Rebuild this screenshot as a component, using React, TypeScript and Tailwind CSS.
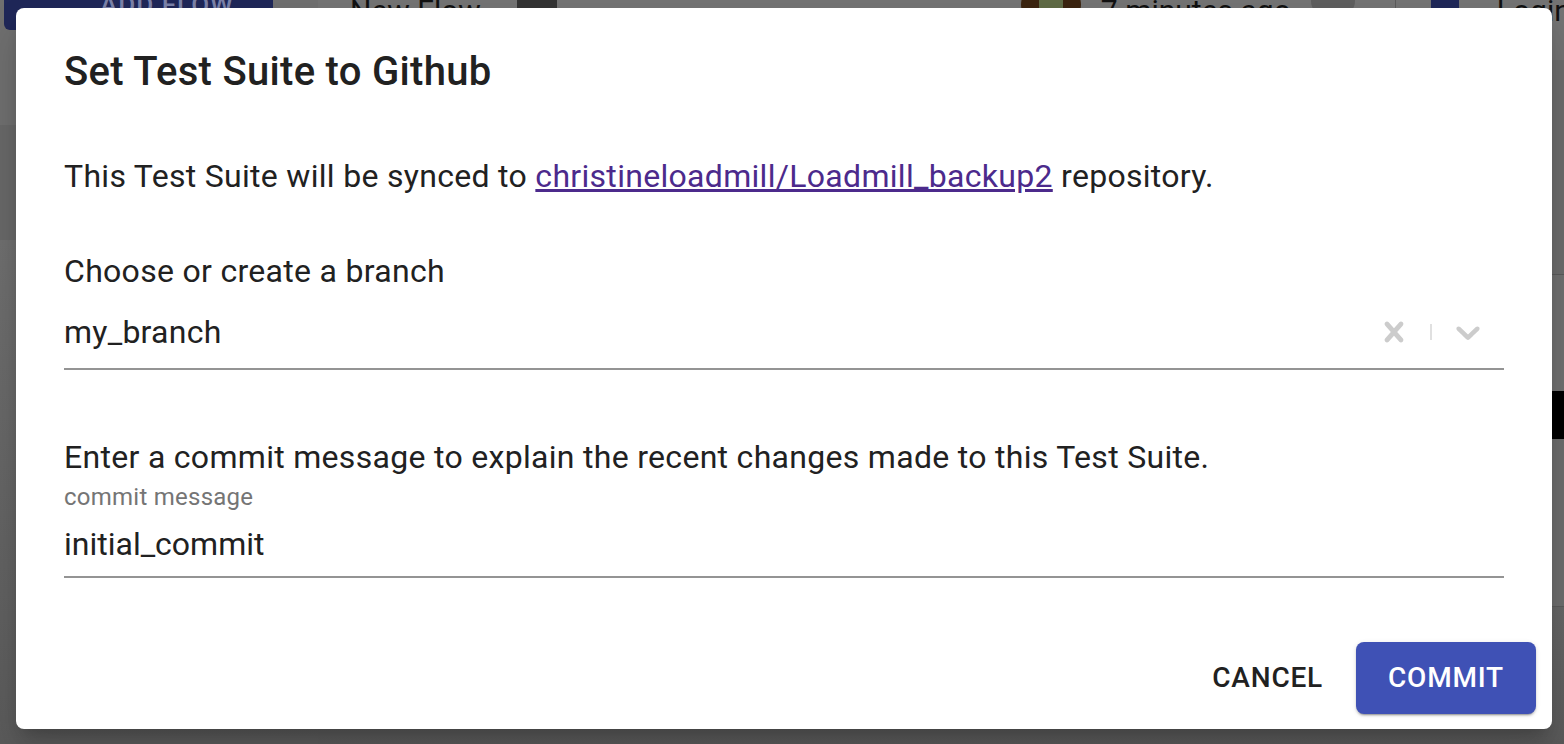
import React from "react";

function CrossIcon() {
  return (
    <svg viewBox="0 0 20 20" className="h-[40px] w-[40px] fill-[#cccccc]">
      <path d="M14.348 14.849c-0.469 0.469-1.229 0.469-1.697 0l-2.651-3.030-2.651 3.029c-0.469 0.469-1.229 0.469-1.697 0-0.469-0.469-0.469-1.229 0-1.697l2.758-3.15-2.759-3.152c-0.469-0.469-0.469-1.228 0-1.697s1.228-0.469 1.697 0l2.652 3.031 2.651-3.031c0.469-0.469 1.228-0.469 1.697 0s0.469 1.229 0 1.697l-2.758 3.152 2.758 3.15c0.469 0.469 0.469 1.229 0 1.698z" />
    </svg>
  );
}

function ChevronIcon() {
  return (
    <svg viewBox="0 0 20 20" className="h-[40px] w-[40px] fill-[#cccccc]">
      <path d="M4.516 7.548c0.436-0.446 1.043-0.481 1.576 0l3.908 3.747 3.908-3.747c0.533-0.481 1.141-0.446 1.574 0 0.436 0.445 0.408 1.197 0 1.615-0.406 0.418-4.695 4.502-4.695 4.502-0.217 0.223-0.502 0.335-0.787 0.335s-0.57-0.112-0.789-0.335c0 0-4.287-4.084-4.695-4.502s-0.436-1.17 0-1.615z" />
    </svg>
  );
}

export default function App() {
  return (
    <div className="relative h-[744px] w-full overflow-hidden bg-[#707070] font-['Roboto',sans-serif]">
      {/* dimmed page behind the dialog */}
      <div className="flex h-full">
        <aside className="flex w-[318px] shrink-0 flex-col bg-[#6f6f6f]">
          <div className="ml-[4px] flex h-[30px] w-[269px] items-start rounded-b-[6px] bg-[#1f2758] pl-[96px]">
            <span className="-mt-[14px] whitespace-nowrap text-[26px] font-medium tracking-[1px] text-[#7b82a8]">
              ADD FLOW
            </span>
          </div>
          <div className="mt-[95px] h-[115px] bg-[#686868]" />
          <div className="flex-1 bg-gradient-to-b from-[#6f6f6f] to-[#5b5b5b]" />
        </aside>
        <main className="flex min-w-0 flex-1 flex-col bg-[#737373]">
          <header className="flex h-[60px] shrink-0 items-start whitespace-nowrap">
            <span className="-mt-[12px] ml-[32px] shrink-0 text-[30px] text-[#111]">New Flow</span>
            <div className="ml-[36px] h-[30px] w-[40px] shrink-0 bg-[#333333]" />
            <div className="-mt-[20px] ml-[464px] h-[50px] w-[60px] shrink-0 rounded-full bg-[#3b2410]">
              <div className="mx-auto h-full w-[24px] bg-[#5f6a45]" />
            </div>
            <span className="-mt-[12px] ml-[20px] shrink-0 text-[30px] text-[#111]">7 minutes ago</span>
            <div className="-mt-[14px] ml-[20px] h-[30px] w-[44px] shrink-0 rounded-full bg-[#5e5e5e]" />
            <div className="ml-[40px] h-[40px] w-px shrink-0 bg-[#5a5a5a]" />
            <div className="-mt-[6px] ml-[35px] h-[26px] w-[28px] shrink-0 rounded-[3px] bg-[#1f2758]" />
            <span className="-mt-[12px] ml-[38px] shrink-0 text-[30px] text-[#111]">Login</span>
          </header>
          <div className="h-[215px] border-b border-[#5a5a5a] bg-[#6c6c6c]" />
          <div className="h-[116px] bg-[#707070]" />
          <div className="flex h-[48px] justify-end">
            <div className="w-[30px] bg-black" />
          </div>
          <div className="h-[168px] border-b border-[#5a5a5a] bg-[#6d6d6d]" />
          <div className="flex-1 bg-gradient-to-b from-[#666666] to-[#5a5a5a]" />
        </main>
      </div>

      {/* dialog */}
      <div className="absolute inset-0 pl-[16px] pt-[8px]">
        <div className="flex h-[721px] w-[1536px] flex-col rounded-[8px] bg-white text-[#212121] shadow-[0_11px_15px_-7px_rgba(0,0,0,0.2),0_24px_38px_3px_rgba(0,0,0,0.14)]">
          <h2 className="px-[48px] pt-[32px] text-[40px] font-medium leading-[64px] tracking-[0.3px]">
            Set Test Suite to Github
          </h2>

          <div className="flex flex-col px-[48px] tracking-[0.3px]">
            <p className="mt-[48px] text-[32px] leading-[48px]">
              This Test Suite will be synced to{" "}
              <a href="#" className="text-[#4c2a8c] underline">
                christineloadmill/Loadmill_backup2
              </a>{" "}
              repository.
            </p>

            <p className="mt-[47px] text-[32px] leading-[48px]">Choose or create a branch</p>
            <div className="flex h-[75px] items-center border-b-2 border-[#949494]">
              <span className="flex-1 text-[32px] tracking-[0.25px]">my_branch</span>
              <div className="flex items-center gap-[16px] pr-[16px]">
                <CrossIcon />
                <div className="h-[16px] w-[2px] bg-[#e0e0e0]" />
                <ChevronIcon />
              </div>
            </div>

            <p className="mt-[63px] text-[32px] leading-[48px]">
              Enter a commit message to explain the recent changes made to this Test Suite.
            </p>
            <label className="mt-[1px] text-[24px] leading-[30px] tracking-[0.25px] text-[#757575]">
              commit message
            </label>
            <div className="flex h-[66px] items-center border-b-2 border-[#949494]">
              <span className="text-[32px] tracking-normal">initial_commit</span>
            </div>
          </div>

          <div className="mt-auto flex items-center justify-end gap-[17px] px-[16px] pb-[15px]">
            <button className="h-[72px] rounded-[8px] px-[16px] text-[28px] font-medium tracking-[0.8px] text-[#212121]">
              CANCEL
            </button>
            <button className="h-[72px] w-[180px] rounded-[8px] bg-[#3f51b5] text-[28px] font-medium tracking-[0.8px] text-white shadow-[0_3px_1px_-2px_rgba(0,0,0,0.2),0_2px_2px_0_rgba(0,0,0,0.14),0_1px_5px_0_rgba(0,0,0,0.12)]">
              COMMIT
            </button>
          </div>
        </div>
      </div>
    </div>
  );
}
